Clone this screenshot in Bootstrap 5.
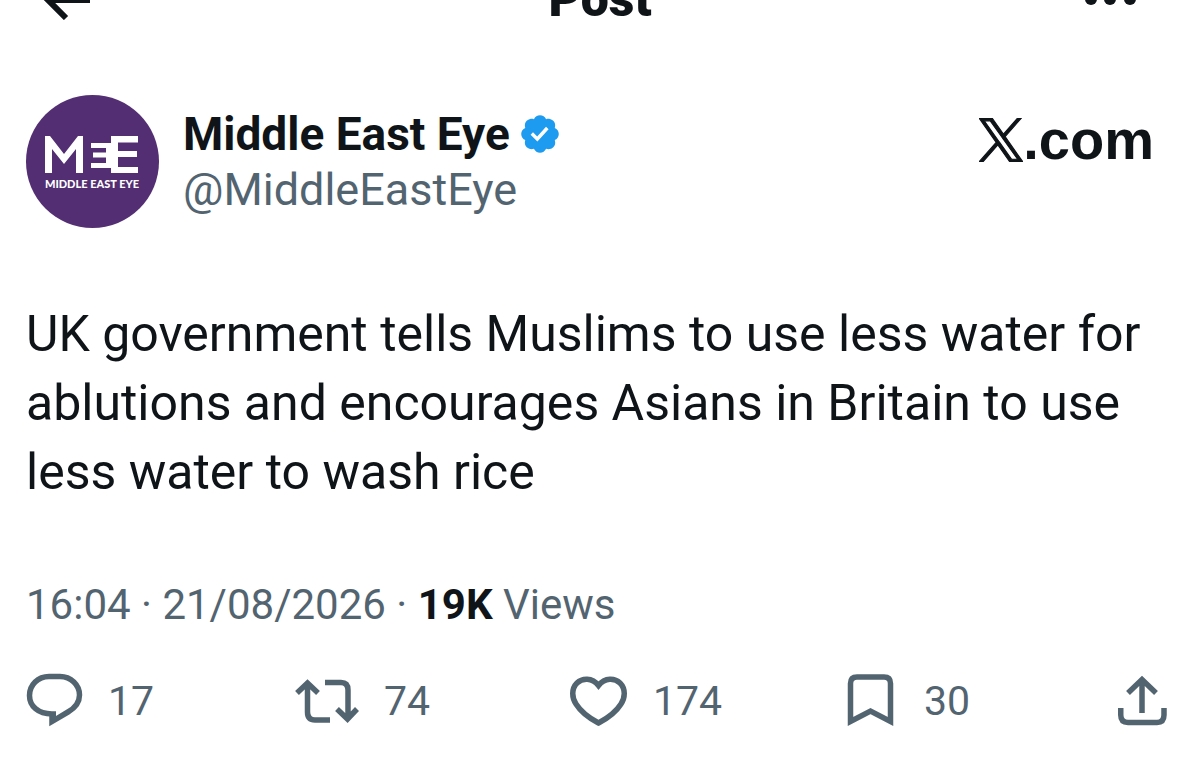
<!DOCTYPE html>
<html lang="en">
<head>
<meta charset="utf-8">
<meta name="viewport" content="width=device-width, initial-scale=1">
<title>Middle East Eye – Post</title>
<link href="https://cdn.jsdelivr.net/npm/bootstrap@5.3.0/dist/css/bootstrap.min.css" rel="stylesheet">
<style>
  body { font-family: Roboto, "Liberation Sans", sans-serif; color: #0f1419; background: #fff; }
  svg { display: block; flex: none; }
  .post-page { padding: 0 32px 0 26px; }
  .topbar { height: 20px; overflow: hidden; }
  .topbar h1 { font-size: 50px; line-height: 42px; font-weight: 900; }
  .side-start { width: 94px; }
  .side-end { width: 88px; }
  .author { margin-top: 75px; }
  .who { margin-top: 11px; }
  .author-name { font-size: 46px; line-height: 56px; font-weight: 700; }
  .handle { font-size: 45px; line-height: 56px; }
  .muted, .act { color: #536471; }
  .site { font: 700 56px/64px "Liberation Sans", Arial, sans-serif; margin: 13px 14px 0 0; }
  .post-text { font-size: 50px; line-height: 69px; margin-top: 72px; }
  .meta { font-size: 42px; line-height: 56px; margin-top: 70px; }
  .meta strong { color: #0f1419; }
  .actions { display: grid; grid-template-columns: 269fr 275fr 277fr 271fr auto; margin-top: 40px; }
  .act { font-size: 41px; line-height: 56px; gap: 25px; }
</style>
</head>
<body>
<div class="container-fluid post-page">
  <header class="topbar d-flex justify-content-between align-items-end">
    <div class="side-start"><button class="btn p-0 border-0 d-block" type="button" aria-label="Back">
      <svg width="66" height="40" viewBox="0 0 66 40"><path d="M64 20H22M41 2L21 19L40 38" fill="none" stroke="#0f1419" stroke-width="6"/></svg>
    </button></div>
    <h1 class="m-0">Post</h1>
    <div class="side-end"><button class="btn p-0 border-0 d-block" type="button" aria-label="More">
      <svg width="60" height="25" viewBox="0 0 60 25"><g fill="#0f1419"><circle cx="11" cy="4" r="6"/><circle cx="30" cy="4" r="6"/><circle cx="50" cy="4" r="6"/></g></svg>
    </button></div>
  </header>
  <main>
    <div class="author d-flex align-items-start">
      <svg width="133" height="133" viewBox="0 0 133 133" role="img" aria-label="Middle East Eye logo">
        <circle cx="66.500" cy="66.500" r="66.500" fill="#532e73"/>
        <path fill="#fff" d="M19 78V41H24L38 59L52 41H57V78H50V54L38 69L26 54V78ZM85 41H112V47.500H92V56H111V62H92V72H112V78H85V73H65V68H80V62.500H67V57.500H80V53H65V48H85Z"/>
        <text x="66" y="93" text-anchor="middle" fill="#fff" font-family="Lato, sans-serif" font-weight="900" font-size="11">MIDDLE EAST EYE</text>
      </svg>
      <div class="who flex-grow-1 ps-4">
        <div class="author-name d-flex align-items-center"><span>Middle East Eye</span>
          <svg class="ms-2" width="44" height="44" viewBox="0 0 22 22" role="img" aria-label="Verified"><path fill="#1d9bf0" d="M20.396 11c-.018-.646-.215-1.275-.57-1.816-.354-.54-.852-.972-1.438-1.246.223-.607.270-1.264.140-1.897-.131-.634-.437-1.218-.882-1.687-.470-.445-1.053-.750-1.687-.882-.633-.130-1.290-.083-1.897.140-.273-.587-.704-1.086-1.245-1.440S11.647 1.620 11 1.604c-.646.017-1.273.213-1.813.568s-.969.854-1.240 1.440c-.608-.223-1.267-.272-1.902-.140-.635.130-1.220.436-1.690.882-.445.470-.749 1.055-.878 1.688-.130.633-.080 1.290.144 1.896-.587.274-1.087.705-1.443 1.245-.356.540-.555 1.170-.574 1.817.020.647.218 1.276.574 1.817.356.540.856.972 1.443 1.245-.224.606-.274 1.263-.144 1.896.130.634.433 1.218.877 1.688.470.443 1.054.747 1.687.878.633.132 1.290.084 1.897-.136.274.586.705 1.084 1.246 1.439.540.354 1.170.551 1.816.569.647-.016 1.276-.213 1.817-.567s.972-.854 1.245-1.440c.604.239 1.266.296 1.903.164.636-.132 1.220-.447 1.680-.907.460-.460.776-1.044.908-1.681s.075-1.299-.165-1.903c.586-.274 1.084-.705 1.439-1.246.354-.540.551-1.170.569-1.816z"/><path fill="#fff" d="M9.700 14.800L6.300 11.400L7.500 10.100L9.600 12.200L14 7.400L15.300 8.600Z"/></svg>
        </div>
        <div class="handle muted">@MiddleEastEye</div>
      </div>
      <a class="site d-flex align-items-center text-decoration-none text-reset" href="#">
        <svg width="44" height="44" viewBox="0 0 24 24" aria-label="X"><path fill="#0f1419" stroke="#0f1419" stroke-width=".6" d="M14.258 10.152L23.176 0h-2.113l-7.747 8.813L7.133 0H0l9.352 13.328L0 23.973h2.113l8.176-9.309 6.531 9.309h7.133zm-2.895 3.293l-.949-1.328L2.875 1.560h3.246l6.086 8.523.945 1.328 7.910 11.078h-3.246z"/></svg>
        <span>.com</span></a>
    </div>
    <p class="post-text mb-0">UK government tells Muslims to use less water for ablutions and encourages Asians in Britain to use less water to wash rice</p>
    <div class="meta muted">16:04 · 21/08/2026 · <strong>19K</strong> Views</div>
    <div class="actions">
      <button class="act btn p-0 border-0 d-flex align-items-center" type="button" aria-label="17 replies">
        <svg width="57" height="56" viewBox="0 0 57 56"><path d="M30 41H26C12 41 3.500 33 3.500 22.500S12 3.500 23 3.500H34C45 3.500 53.500 12 53.500 22C53.500 30 49 35 42 39L26 48.500V39" fill="none" stroke="#536471" stroke-width="5.500"/></svg>17</button>
      <button class="act btn p-0 border-0 d-flex align-items-center" type="button" aria-label="74 reposts">
        <svg width="64" height="56" viewBox="0 0 64 56"><g fill="none" stroke="#536471" stroke-width="5.500"><path d="M2 20L12.500 10L23 20M12.500 11V39Q12.500 47 20 47H35M30 9.500H46Q53 9.500 53 17V46M42 36L52.500 46L62 36"/></g></svg>74</button>
      <button class="act btn p-0 border-0 d-flex align-items-center" type="button" aria-label="174 likes">
        <svg width="58" height="56" viewBox="0 0 58 56"><path d="M28.500 12.500C22 4 12 5 7 10C1 16 2 25 6 31C11 39 19 45 28.500 50C38 45 46 39 51 31C55 25 56 16 50 10C45 5 35 4 28.500 12.500Z" fill="none" stroke="#536471" stroke-width="5.500"/></svg>174</button>
      <button class="act btn p-0 border-0 d-flex align-items-center" type="button" aria-label="30 bookmarks">
        <svg width="52" height="56" viewBox="0 0 52 56"><path d="M3.500 48.500V10.500Q3.500 4 10 4H37Q43.500 4 43.500 10.500V48.500L23.500 38Z" fill="none" stroke="#536471" stroke-width="5.500"/></svg>30</button>
      <button class="act btn p-0 border-0 d-flex align-items-center" type="button" aria-label="Share">
        <svg width="50" height="56" viewBox="0 0 50 56"><path d="M10 20L24 6.500L38 20M24 7V40M2.750 35V42Q2.750 49.500 10 49.500H39Q46 49.500 46 42V35" fill="none" stroke="#536471" stroke-width="5.500"/></svg></button>
    </div>
  </main>
</div>
<script src="https://cdn.jsdelivr.net/npm/bootstrap@5.3.0/dist/js/bootstrap.bundle.min.js"></script>
</body>
</html>
